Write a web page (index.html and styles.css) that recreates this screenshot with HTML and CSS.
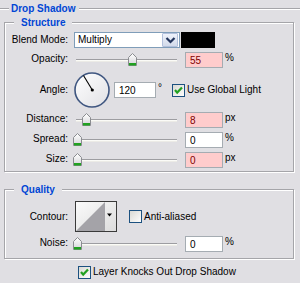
FILE: index.html
```html
<!DOCTYPE html>
<html>
<head>
<meta charset="utf-8">
<link rel="stylesheet" href="styles.css">
</head>
<body>
<svg class="defs" aria-hidden="true">
  <defs>
    <linearGradient id="thumbGrad" x1="0" y1="0" x2="0" y2="1">
      <stop offset="0" stop-color="#ffffff"/>
      <stop offset="1" stop-color="#d4d4d8"/>
    </linearGradient>
    <linearGradient id="cbGrad" x1="0" y1="0" x2="1" y2="1">
      <stop offset="0" stop-color="#d8d8d2"/>
      <stop offset="1" stop-color="#ffffff"/>
    </linearGradient>
    <linearGradient id="dialGrad" x1="0" y1="0" x2="1" y2="1">
      <stop offset="0" stop-color="#ffffff"/>
      <stop offset="1" stop-color="#e0e0e4"/>
    </linearGradient>
    <linearGradient id="contourGrad" x1="0" y1="0" x2="1" y2="1">
      <stop offset="0" stop-color="#fbfbfb"/>
      <stop offset="1" stop-color="#dcdcdc"/>
    </linearGradient>
    <symbol id="thumb" viewBox="0 0 9 13">
      <path d="M4.5 0.5 L8.5 4.5 L8.5 12.5 L0.5 12.5 L0.5 4.5 Z" fill="url(#thumbGrad)" stroke="#8a8c90"/>
      <rect x="1" y="10" width="7" height="2.5" fill="#21a121"/>
    </symbol>
  </defs>
</svg>
<div class="panel">
  <div class="hdr">
    <span class="rule rule-short"></span>
    <span class="hdr-title">Drop Shadow</span>
    <span class="rule rule-fill"></span>
  </div>

  <div class="group group-structure">
    <div class="legend">Structure</div>

    <div class="row row-first">
      <div class="lbl">Blend Mode:</div>
      <div class="select">
        <span class="select-text">Multiply</span>
        <span class="select-btn">
          <svg width="16" height="14" viewBox="0 0 16 14"><path d="M4.5 5 L8.5 9 L12.5 5" fill="none" stroke="#22345c" stroke-width="2.2"/></svg>
        </span>
      </div>
      <div class="swatch"></div>
    </div>

    <div class="row slider-row">
      <div class="lbl">Opacity:</div>
      <div class="slider"><div class="track"></div><svg class="thumb" width="9" height="13" style="left:55px"><use href="#thumb"/></svg></div>
      <div class="num pink">55</div>
      <div class="unit">%</div>
    </div>

    <div class="row angle-row">
      <div class="lbl">Angle:</div>
      <svg class="dial" width="36" height="36" viewBox="0 0 36 36">
        <circle cx="18" cy="18" r="17" fill="url(#dialGrad)" stroke="#3f5680" stroke-width="1.6"/>
        <line x1="18.3" y1="18" x2="9.5" y2="3.5" stroke="#000" stroke-width="1.1"/>
        <circle cx="18.3" cy="18" r="1.6" fill="#000"/>
      </svg>
      <div class="num num-angle">120</div>
      <div class="unit unit-deg">°</div>
      <div class="check check-global">
        <svg width="13" height="13" viewBox="0 0 13 13"><rect x="0.5" y="0.5" width="12" height="12" fill="url(#cbGrad)" stroke="#1c5180"/><path d="M3 6 L5.2 8.6 L10 3.5" fill="none" stroke="#21a121" stroke-width="2.2"/></svg>
        <span>Use Global Light</span>
      </div>
    </div>

    <div class="row slider-row">
      <div class="lbl">Distance:</div>
      <div class="slider"><div class="track"></div><svg class="thumb" width="9" height="13" style="left:9px"><use href="#thumb"/></svg></div>
      <div class="num pink">8</div>
      <div class="unit">px</div>
    </div>

    <div class="row slider-row">
      <div class="lbl">Spread:</div>
      <div class="slider"><div class="track"></div><svg class="thumb" width="9" height="13" style="left:0px"><use href="#thumb"/></svg></div>
      <div class="num">0</div>
      <div class="unit">%</div>
    </div>

    <div class="row slider-row">
      <div class="lbl">Size:</div>
      <div class="slider"><div class="track"></div><svg class="thumb" width="9" height="13" style="left:0px"><use href="#thumb"/></svg></div>
      <div class="num pink">0</div>
      <div class="unit">px</div>
    </div>
  </div>

  <div class="group group-quality">
    <div class="legend">Quality</div>

    <div class="row contour-row">
      <div class="lbl">Contour:</div>
      <svg class="contour" width="42" height="31" viewBox="0 0 42 31">
        <rect x="0.5" y="0.5" width="41" height="30" fill="url(#contourGrad)" stroke="#3a3a3a"/>
        <polygon points="1,30 30,1 30,30" fill="#a4a3a8"/>
        <polygon points="32,12.5 37,12.5 34.5,15.5" fill="#000"/>
      </svg>
      <div class="check check-aa">
        <svg width="13" height="13" viewBox="0 0 13 13"><rect x="0.5" y="0.5" width="12" height="12" fill="url(#cbGrad)" stroke="#1c5180"/></svg>
        <span>Anti-aliased</span>
      </div>
    </div>

    <div class="row slider-row row-noise">
      <div class="lbl">Noise:</div>
      <div class="slider"><div class="track"></div><svg class="thumb" width="9" height="13" style="left:0px"><use href="#thumb"/></svg></div>
      <div class="num">0</div>
      <div class="unit">%</div>
    </div>
  </div>

  <div class="check check-knock">
    <svg width="13" height="13" viewBox="0 0 13 13"><rect x="0.5" y="0.5" width="12" height="12" fill="url(#cbGrad)" stroke="#1c5180"/><path d="M3 6 L5.2 8.6 L10 3.5" fill="none" stroke="#21a121" stroke-width="2.2"/></svg>
    <span>Layer Knocks Out Drop Shadow</span>
  </div>
</div>
</body>
</html>
```

FILE: styles.css
```css
* {
  box-sizing: border-box;
}

body {
  margin: 0;
  width: 300px;
  height: 283px;
  overflow: hidden;
  background: #e0dfe3;
  font-family: "Liberation Sans", Arial, sans-serif;
  font-size: 10px;
  color: #000;
}

.defs {
  position: absolute;
  width: 0;
  height: 0;
}

.panel {
  padding-top: 3px;
}

/* header */
.hdr {
  display: flex;
  align-items: center;
  height: 12px;
}

.rule {
  height: 2px;
  border-top: 1px solid #a5a5a9;
  border-bottom: 1px solid #fff;
}

.rule-short {
  width: 9px;
}

.rule-fill {
  flex: 1;
}

.hdr-title {
  padding: 0 4px 0 2px;
  font-weight: bold;
  color: #0046d5;
  line-height: 12px;
}

/* group boxes */
.group {
  margin: 0 6px 0 4px;
  border: 1px solid #a5a5a9;
  box-shadow: inset 1px 1px 0 #fff, 1px 1px 0 #fff;
}

.group-structure {
  margin-top: 7px;
  padding-bottom: 1px;
}

.group-quality {
  margin-top: 17px;
  padding-bottom: 4px;
}

.legend {
  width: max-content;
  height: 12px;
  margin: -6px 0 0 9px;
  padding: 0 7px;
  background: #e0dfe3;
  font-weight: bold;
  color: #0046d5;
  line-height: 12px;
}

/* rows */
.row {
  display: flex;
  align-items: center;
  height: 20px;
}

.row-first {
  margin-top: 1px;
}

.lbl {
  width: 63px;
  margin-right: 6px;
  text-align: right;
  line-height: 12px;
}

.slider-row .lbl {
  align-self: flex-start;
  margin-top: 3px;
  margin-right: 5px;
}

/* select */
.select {
  display: flex;
  align-items: center;
  justify-content: space-between;
  width: 106px;
  height: 16px;
  padding: 0 1px 0 3px;
  border: 1px solid #7f9db9;
  background: #fff;
}

.select-text {
  line-height: 12px;
}

.select-btn {
  display: flex;
  width: 16px;
  height: 14px;
  border: 1px solid #b2c0dc;
  border-radius: 1px;
  background: linear-gradient(#eef2fb, #d2daea);
}

.select-btn svg {
  margin: -1px;
}

.swatch {
  width: 34px;
  height: 16px;
  margin-left: 1px;
  background: #000;
}

/* slider */
.slider {
  position: relative;
  width: 108px;
  height: 20px;
}

.track {
  width: 101px;
  height: 3px;
  margin: 9px 0 0 3px;
  border-top: 1px solid #9d9da1;
  border-bottom: 1px solid #ecebe6;
  background: #fbfbf7;
}

.thumb {
  position: absolute;
  top: 3px;
}

/* numeric fields */
.num {
  width: 38px;
  height: 16px;
  margin-left: 4px;
  padding: 2px 0 0 4px;
  border: 1px solid #a5acb2;
  background: #fff;
  line-height: 11px;
}

.pink {
  background: #ffcccc;
  color: #800000;
}

.unit {
  align-self: flex-start;
  margin: 2px 0 0 2px;
  line-height: 12px;
}

/* angle */
.angle-row {
  height: 40px;
}

.num-angle {
  width: 42px;
}

.unit-deg {
  margin-top: 12px;
}

/* checkboxes */
.check {
  display: flex;
  align-items: center;
  gap: 2px;
  line-height: 12px;
}

.check svg {
  flex: none;
}

.check-global {
  margin-left: 10px;
}

.check-aa {
  margin-left: 12px;
}

.check-knock {
  height: 14px;
  margin: 6px 0 0 78px;
}

/* contour */
.contour-row {
  height: 31px;
  margin-top: 5px;
}

.contour {
  margin-left: 1px;
}

.row-noise {
  margin-top: 2px;
}
```
